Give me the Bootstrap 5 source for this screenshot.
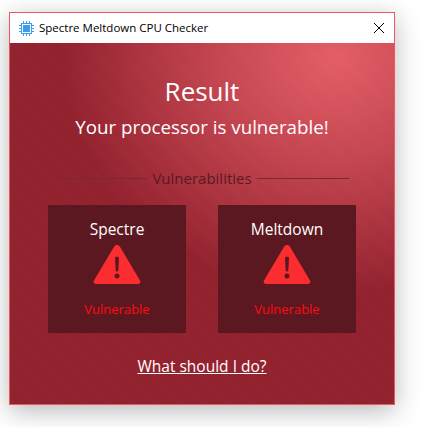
<!DOCTYPE html>
<html lang="en">
<head>
    <meta charset="UTF-8">
    <meta name="viewport" content="width=device-width, initial-scale=1.0">
    <title>Spectre Meltdown CPU Checker</title>
    <link href="https://cdn.jsdelivr.net/npm/bootstrap@5.3.0/dist/css/bootstrap.min.css" rel="stylesheet">
    <script src="https://cdn.jsdelivr.net/npm/bootstrap@5.3.0/dist/js/bootstrap.bundle.min.js"></script>
    <style>
        html, body { height: 100%; overflow: hidden; }
        body {
            background: #fff;
            padding: 12px 0 0 9px;
            font-family: "Open Sans", "Noto Sans", sans-serif;
        }
        .app-window {
            width: 386px;
            height: 393px;
            border: 1px solid #f0565e;
            box-shadow: 0 6px 24px rgba(0, 0, 0, .28);
        }
        .title-bar {
            height: 30px;
            background: #fff;
            padding-left: 8px;
            font-size: 11.5px;
            color: #000;
        }
        .close-x { width: 30px; height: 30px; }
        .title-text { margin-left: 4px; }
        .app-body {
            background:
                repeating-linear-gradient(45deg, rgba(255,255,255,.007) 0 5px, rgba(255,255,255,0) 5px 17px),
                radial-gradient(ellipse 270px 235px at 325px 15px, #e45e67 0%, rgba(228,94,103,.62) 42%, rgba(228,94,103,0) 100%),
                #93222f;
            color: #fff;
        }
        .result-title { font-size: 26px; line-height: 36px; padding-top: 30px; }
        .result-sub { font-size: 18.75px; line-height: 24px; margin-top: 6px; }
        .vuln-divider { margin: 30px 45px 0; color: #5a1a22; font-size: 15px; line-height: 18px; gap: 5px; }
        .vuln-divider hr { flex: 1; margin: 0; border: 0; border-top: 1px solid #762a36; opacity: 1; }
        .cards-row { margin-top: 18px; gap: 32px; }
        .vuln-card {
            width: 138px;
            height: 128px;
            background: #5c1820;
            padding-top: 14px;
        }
        .vuln-name { font-size: 15.5px; line-height: 20px; }
        .vuln-icon { width: 48px; height: 40px; display: block; margin: 6px auto 0; }
        .vuln-state { font-size: 13px; line-height: 18px; color: #ff0a14; margin-top: 15px; }
        .help-link { color: #fff; font-size: 15.5px; margin-top: 23px; line-height: 20px; }
        .help-link:hover { color: #fff; }
    </style>
</head>
<body>
    <div class="app-window d-flex flex-column">
        <div class="title-bar d-flex align-items-center">
            <svg width="17" height="17" viewBox="0 0 17 17" class="flex-shrink-0">
                <rect x="5" y="5" width="7" height="7" fill="#3a9cec"/>
                <rect x="3.5" y="3.5" width="10" height="10" fill="none" stroke="#3a9cec"/>
                <path d="M5.5 1v2M8.5 1v2M11.5 1v2M5.5 14v2M8.5 14v2M11.5 14v2M1 5.5h2M1 8.5h2M1 11.5h2M14 5.5h2M14 8.5h2M14 11.5h2" stroke="#3a9cec" fill="none"/>
            </svg>
            <span class="title-text flex-grow-1">Spectre Meltdown CPU Checker</span>
            <svg class="close-x" viewBox="0 0 30 30"><path d="M10 10l10 10M20 10L10 20" stroke="#000" fill="none"/></svg>
        </div>
        <div class="app-body flex-grow-1 text-center d-flex flex-column">
            <div class="result-title">Result</div>
            <div class="result-sub">Your processor is vulnerable!</div>
            <div class="vuln-divider d-flex align-items-center">
                <hr><span>Vulnerabilities</span><hr>
            </div>
            <div class="cards-row d-flex justify-content-center">
                <div class="vuln-card">
                    <div class="vuln-name">Spectre</div>
                    <svg class="vuln-icon" viewBox="0 0 48 40">
                        <path d="M24 0c1.2 0 2.2.6 2.8 1.6l20.2 34c1 1.8 0 3.4-2 3.4H3c-2 0-3-1.6-2-3.4l20.2-34C21.8.6 22.8 0 24 0z" fill="#fb2d31"/>
                        <path d="M22 13c0-1.6 4-1.6 4 0l-.7 12.5c-.1 1.3-2.5 1.3-2.6 0z" fill="#5c1820"/><circle cx="24" cy="31" r="2.5" fill="#5c1820"/>
                    </svg>
                    <div class="vuln-state">Vulnerable</div>
                </div>
                <div class="vuln-card">
                    <div class="vuln-name">Meltdown</div>
                    <svg class="vuln-icon" viewBox="0 0 48 40">
                        <path d="M24 0c1.2 0 2.2.6 2.8 1.6l20.2 34c1 1.8 0 3.4-2 3.4H3c-2 0-3-1.6-2-3.4l20.2-34C21.8.6 22.8 0 24 0z" fill="#fb2d31"/>
                        <path d="M22 13c0-1.6 4-1.6 4 0l-.7 12.5c-.1 1.3-2.5 1.3-2.6 0z" fill="#5c1820"/><circle cx="24" cy="31" r="2.5" fill="#5c1820"/>
                    </svg>
                    <div class="vuln-state">Vulnerable</div>
                </div>
            </div>
            <div><a href="#" class="help-link d-inline-block">What should I do?</a></div>
        </div>
    </div>
</body>
</html>
